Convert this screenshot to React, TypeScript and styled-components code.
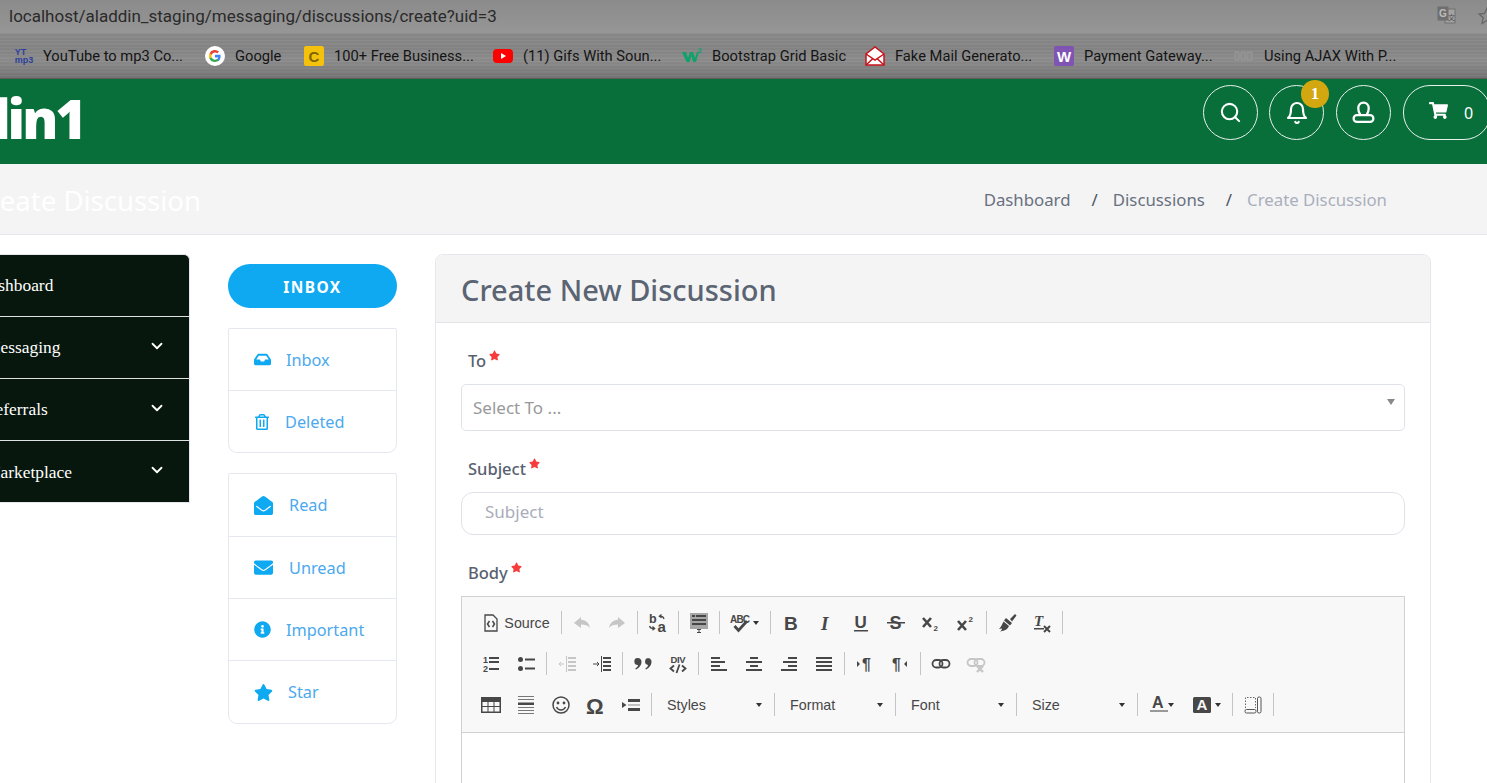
import React from "react";
import styled, { createGlobalStyle } from "styled-components";
import {
  FaShoppingCart,
  FaInbox,
  FaRegTrashAlt,
  FaEnvelopeOpen,
  FaEnvelope,
  FaInfoCircle,
  FaStar,
} from "react-icons/fa";
import { FiSearch, FiBell, FiChevronDown } from "react-icons/fi";

const UI = `"Noto Sans", "Open Sans", sans-serif`;

const Global = createGlobalStyle`
  html, body { margin: 0; padding: 0; height: 100%; overflow: hidden; background: #fff; }
  #root { height: 100%; }
  * { box-sizing: border-box; }
`;

const Page = styled.div`
  width: 1487px;
  height: 783px;
  overflow: hidden;
  display: flex;
  flex-direction: column;
  font-family: ${UI};
`;

const BrowserChrome = styled.div`
  height: 79px;
  flex: none;
  display: flex;
  flex-direction: column;
  border-bottom: 1px solid #5d5d5d;
`;

const AddressRow = styled.div`
  height: 33px;
  background: linear-gradient(#8b8b8b, #969696);
  display: flex;
  align-items: center;
  justify-content: space-between;
  padding: 0 0 2px 9px;
  color: #2a2a2a;
  font: 17px "Roboto", sans-serif;
  overflow: hidden;
`;

const AddressTools = styled.div`
  display: flex;
  align-items: center;
  gap: 21px;
  margin-right: -10px;
`;

const BookmarkRow = styled.div`
  flex: 1;
  display: flex;
  align-items: center;
  padding: 1px 0 0 15px;
  background:
    repeating-linear-gradient(180deg, rgba(255,255,255,.03) 0 1px, rgba(0,0,0,.025) 1px 3px, rgba(255,255,255,.015) 3px 5px, rgba(0,0,0,.03) 5px 7px),
    linear-gradient(#8a8a8a, #868686 35%, #8e8e8e 60%, #767676);
`;

const Bookmark = styled.div<{ $w: number }>`
  width: ${(p) => p.$w}px;
  flex: none;
  display: flex;
  align-items: center;
  gap: 10px;
  color: #141414;
  font: 14.7px "Roboto", sans-serif;
  white-space: nowrap;
`;

const Fav = styled.span<{ $bg?: string; $color?: string }>`
  width: 20px;
  height: 20px;
  flex: none;
  display: flex;
  align-items: center;
  justify-content: center;
  border-radius: 2px;
  background: ${(p) => p.$bg || "transparent"};
  color: ${(p) => p.$color || "#fff"};
  font: 700 15px "Liberation Sans", sans-serif;
`;

const YtMp3 = styled.span`
  width: 18px;
  flex: none;
  display: flex;
  flex-direction: column;
  align-items: center;
  color: #2c3f9e;
  font: 700 9px/8px "Liberation Sans", sans-serif;
`;

const Header = styled.header`
  height: 85px;
  flex: none;
  background: #086f3a;
  display: flex;
  justify-content: space-between;
  position: relative;
`;

const LogoClip = styled.div`
  width: 84px;
  height: 85px;
  overflow: hidden;
  display: flex;
  justify-content: flex-end;
  align-items: center;
`;

const Logo = styled.div`
  color: #fff;
  font: 800 54px/1 "Open Sans", sans-serif;
  letter-spacing: -3px;
  white-space: nowrap;
  margin-top: -7px;
`;

const HeaderTools = styled.div`
  display: flex;
  align-items: flex-start;
  padding-top: 6px;
  gap: 12px;
  margin-right: -4px;
`;

const RoundBtn = styled.div`
  width: 55px;
  height: 55px;
  border: 1px solid #e8f1ec;
  border-radius: 50%;
  color: #fff;
  display: flex;
  align-items: center;
  justify-content: center;
  position: relative;
  font-size: 24px;
  &:first-child { margin-right: -1px; }
`;

const Badge = styled.span`
  position: absolute;
  top: -6px;
  right: -6px;
  width: 28px;
  height: 28px;
  border-radius: 50%;
  background: #d3a70f;
  color: #fff;
  display: flex;
  align-items: center;
  justify-content: center;
  font: 700 17px "Liberation Serif", serif;
`;

const CartBtn = styled.div`
  width: 88px;
  height: 55px;
  border: 1px solid #e8f1ec;
  border-radius: 27px;
  color: #fff;
  display: flex;
  align-items: center;
  padding: 0 0 5px 25px;
  gap: 16px;
  font-size: 19px;
  span { font: 16px ${UI}; margin-top: 5px; }
`;

const SubHeader = styled.div`
  height: 71px;
  flex: none;
  background: #f4f4f4;
  border-bottom: 1px solid #e6e7ee;
  display: flex;
  align-items: center;
  justify-content: space-between;
  padding-right: 100px;
`;

const PageTitleClip = styled.div`
  width: 201px;
  overflow: hidden;
  display: flex;
  justify-content: flex-end;
`;

const PageTitle = styled.h1`
  margin: 3px 0 0;
  color: #fff;
  font: 400 27.5px ${UI};
  white-space: nowrap;
`;

const Crumbs = styled.div`
  display: flex;
  align-items: center;
  font-size: 16.8px;
  color: #68707f;
`;

const CrumbSep = styled.span`
  margin: 0 15px 0 21px;
  color: #4d5563;
`;

const CrumbCurrent = styled.span`
  color: #a9afbd;
`;

const Main = styled.main`
  flex: 1;
  display: flex;
  align-items: flex-start;
  padding-top: 19px;
  min-height: 0;
`;

const Sidebar = styled.nav`
  width: 190px;
  height: 249px;
  flex: none;
  background: #07170d;
  border-top-right-radius: 6px;
  border: 1px solid #e6e7ee;
  border-left: 0;
  overflow: hidden;
`;

const SideItem = styled.div`
  height: 62px;
  display: flex;
  align-items: center;
  justify-content: space-between;
  padding: 0 23px 0 0;
  color: #fff;
  font: 17.4px "Liberation Serif", serif;
  white-space: nowrap;
  svg { margin-bottom: 4px; }
  &:not(:last-child) { border-bottom: 1px solid #dfe3e3; }
`;

const SideLabel = styled.span<{ $offset: number }>`
  margin-left: ${(p) => p.$offset}px;
`;

const MailColumn = styled.div`
  width: 169px;
  flex: none;
  margin: 10px 38px 0 38px;
  display: flex;
  flex-direction: column;
  gap: 20px;
`;

const InboxButton = styled.button`
  height: 44px;
  border: 0;
  border-radius: 22px;
  background: #0ea9f1;
  color: #fff;
  font: 700 15.5px ${UI};
  letter-spacing: 1.4px;
  padding: 1px 0 0;
`;

const MailList = styled.div`
  border: 1px solid #e6e8f0;
  border-radius: 2px 2px 9px 9px;
`;

const MailRow = styled.div<{ $gap: number; $h?: number }>`
  height: ${(p) => p.$h || 62}px;
  display: flex;
  align-items: center;
  padding-left: 25px;
  gap: ${(p) => p.$gap}px;
  color: #4ba9ee;
  font-size: 16.3px;
  svg { color: #0ea9f1; flex: none; }
  &:not(:last-child) { border-bottom: 1px solid #e6e8f0; }
`;

const Panel = styled.section`
  width: 996px;
  flex: none;
  height: 700px;
  border: 1px solid #e6e7ee;
  border-radius: 8px 8px 0 0;
  overflow: hidden;
`;

const PanelHead = styled.div`
  height: 68px;
  background: #f4f4f4;
  border-bottom: 1px solid #e3e4e8;
  display: flex;
  align-items: center;
  padding: 2px 25px 0;
`;

const PanelTitle = styled.h2`
  margin: 0;
  color: #5a6473;
  font: 500 29px ${UI};
  white-space: nowrap;
`;

const Form = styled.div`
  padding: 25px 25px 0;
`;

const FieldLabel = styled.label`
  display: flex;
  align-items: flex-start;
  gap: 3px;
  height: 24px;
  padding-left: 7px;
  color: #586170;
  font: 500 16.5px/26px ${UI};
  margin-bottom: 12px;
  svg { color: #f63c3c; margin-top: 2px; }
`;

const SelectBox = styled.div`
  height: 47px;
  border: 1px solid #dfe2e8;
  border-radius: 5px;
  display: flex;
  align-items: center;
  justify-content: space-between;
  padding: 0 9px 0 11px;
  color: #999;
  font-size: 17px;
  margin-bottom: 25px;
  &::after {
    content: "";
    border: 4.5px solid transparent;
    border-top: 6px solid #888;
    border-bottom: 0;
    margin-top: -12px;
  }
`;

const TextInput = styled.input`
  display: block;
  width: 100%;
  height: 43px;
  border: 1px solid #dfe2e8;
  border-radius: 12px;
  padding: 0 23px 5px;
  font: 17px ${UI};
  outline: 0;
  margin-bottom: 25px;
  &::placeholder { color: #a9adba; opacity: 1; }
`;

const Editor = styled.div`
  border: 1px solid #d1d1d1;
`;

const Toolbar = styled.div`
  height: 136px;
  background: #f8f8f8;
  border-bottom: 1px solid #d1d1d1;
  padding: 5px 0 0 11px;
  display: flex;
  flex-direction: column;
`;

const ToolRow = styled.div`
  height: 41px;
  flex: none;
  display: flex;
  align-items: center;
`;

const ToolBtn = styled.span<{ $w?: number }>`
  width: ${(p) => p.$w || 35}px;
  height: 30px;
  flex: none;
  display: flex;
  align-items: center;
  justify-content: center;
  gap: 3px;
  color: #474747;
  font: 14.3px "Liberation Sans", sans-serif;
`;

const ToolSep = styled.i`
  width: 1px;
  height: 23px;
  flex: none;
  margin: 0 2px 0 3px;
  background: #c4c4c4;
`;

const Combo = styled.span<{ $w: number }>`
  width: ${(p) => p.$w}px;
  height: 30px;
  flex: none;
  display: flex;
  align-items: center;
  justify-content: space-between;
  padding: 0 9px 0 13px;
  color: #474747;
  font: 14.3px "Liberation Sans", sans-serif;
`;

const Caret = styled.b<{ $tight?: boolean }>`
  flex: none;
  margin-left: ${(p) => (p.$tight ? -4 : 0)}px;
  border: 3.5px solid transparent;
  border-top: 4px solid #333;
  border-bottom: 0;
`;

const EditArea = styled.div`
  height: 300px;
  background: #fff;
`;

const Glyph = styled.svg<{ $off?: boolean }>`
  width: 20px;
  height: 20px;
  flex: none;
  fill: #474747;
  stroke: none;
  opacity: ${(p) => (p.$off ? 0.28 : 1)};
  text { font-family: "Liberation Sans", sans-serif; }
`;

type IconProps = { off?: boolean; children: React.ReactNode };
const G = ({ off, children }: IconProps) => (
  <Glyph $off={off} viewBox="0 0 20 20">
    {children}
  </Glyph>
);

const Lines = ({ rows }: { rows: [number, number, number][] }) => (
  <>
    {rows.map(([x, y, w], i) => (
      <rect key={i} x={x} y={y} width={w} height={2} />
    ))}
  </>
);

const line = { stroke: "#474747", fill: "none" } as const;

const Icons = {
  source: (
    <G>
      <path d="M4 2h8l4 4v12H4z" {...line} strokeWidth="1.3" />
      <path d="M8.5 8 6.5 11l2 3M11.5 8l2 3-2 3" {...line} strokeWidth="1.5" />
    </G>
  ),
  undo: (
    <G off>
      <path d="M9 4 2 10l7 5v-3.4c4 0 7 .8 9 3.4-.6-4.6-4-8-9-8.3z" />
    </G>
  ),
  redo: (
    <G off>
      <path d="M11 4l7 6-7 5v-3.4c-4 0-7 .8-9 3.4.6-4.6 4-8 9-8.3z" />
    </G>
  ),
  replace: (
    <G>
      <text x="1" y="10" fontSize="12.500" fontWeight="700">b</text>
      <text x="9.500" y="19" fontSize="15" fontWeight="700">a</text>
      <path d="M16 6c-.5-2-2-3-4.500-2.800M13.500 1.500l-2.200 1.700 2.200 1.700M1.500 13c.4 1.800 2 2.800 5 2.500M4.500 13.500l2.200 2-2.200 1.800" {...line} strokeWidth="1.200" />
    </G>
  ),
  preview: (
    <G>
      <rect x="1" y="0" width="18" height="16" fill="#a6a6a6" />
      <Lines rows={[[3, 2, 3], [7, 2, 10], [3, 6, 14], [3, 10, 14]]} />
      <path d="M8 16.500h4M10 16.500v3M8 19.500h4" {...line} />
    </G>
  ),
  spell: (
    <G>
      <text x="0" y="9.500" fontSize="10" fontWeight="700" textLength="20">ABC</text>
      <path d="M4.500 13l4 4.500 8.500-9.500" {...line} strokeWidth="2.800" />
    </G>
  ),
  bold: (
    <G>
      <text x="3" y="17" fontSize="19" fontWeight="700">B</text>
    </G>
  ),
  italic: (
    <G>
      <text x="5" y="17" fontSize="19" fontWeight="700" fontStyle="italic" style={{ fontFamily: "Liberation Serif" }}>I</text>
    </G>
  ),
  underline: (
    <G>
      <text x="3.500" y="15" fontSize="17" fontWeight="700">U</text>
      <rect x="3" y="17" width="14" height="1.500" />
    </G>
  ),
  strike: (
    <G>
      <text x="3.500" y="16" fontSize="18" fontWeight="700">S</text>
      <rect x="1" y="9" width="18" height="1.500" />
    </G>
  ),
  sub: (
    <G>
      <path d="M2 5l8 9m0-9-8 9" {...line} strokeWidth="2.600" />
      <text x="12.500" y="18" fontSize="8" fontWeight="700">2</text>
    </G>
  ),
  sup: (
    <G>
      <path d="M2 8l8 9m0-9-8 9" {...line} strokeWidth="2.600" />
      <text x="12.500" y="9" fontSize="8" fontWeight="700">2</text>
    </G>
  ),
  brush: (
    <G>
      <path d="M13 6 18 1l1.500 1.500-4.500 6zM9 5l6 5-2 2.500-6-5zM6.500 8.500l5.500 4.500c-1 3-4 5-9 5.500 1.500-1 2-2 2-3l-3 .5c2-2 3-4 4.500-7.500z" />
    </G>
  ),
  clear: (
    <G>
      <text x="2" y="13" fontSize="15" fontWeight="700" fontStyle="italic" style={{ fontFamily: "Liberation Serif" }}>T</text>
      <rect x="2" y="15" width="10" height="1.500" />
      <path d="M12 13l6 6m0-6-6 6" {...line} strokeWidth="2" />
    </G>
  ),
  numbered: (
    <G>
      <text x="2" y="9" fontSize="9" fontWeight="700">1</text>
      <text x="2" y="18" fontSize="9" fontWeight="700">2</text>
      <Lines rows={[[8, 3, 10], [8, 7, 10], [8, 14, 10]]} />
    </G>
  ),
  bullets: (
    <G>
      <circle cx="4.500" cy="5.500" r="2.500" />
      <circle cx="4.500" cy="14.500" r="2.500" />
      <Lines rows={[[9, 4.500, 10], [9, 13.500, 10]]} />
    </G>
  ),
  outdent: (
    <G off>
      <Lines rows={[[11, 3, 8], [11, 7, 8], [11, 11, 8], [11, 15, 8]]} />
      <rect x="9" y="2" width="1" height="16" />
      <path d="M2 10h5M4 8l-2 2 2 2" {...line} />
    </G>
  ),
  indent: (
    <G>
      <Lines rows={[[11, 3, 8], [11, 7, 8], [11, 11, 8], [11, 15, 8]]} />
      <rect x="9" y="2" width="1" height="16" />
      <path d="M1 10h6M5 8l2 2-2 2" {...line} />
    </G>
  ),
  quote: (
    <G>
      <path d="M4.500 4a3.600 3.600 0 0 1 4 3.800c0 3.800-2.800 6.500-5.500 7.700l-.7-1.100c1.500-.9 2.600-2.200 2.800-3.500A3.300 3.300 0 0 1 4.500 4zM14.500 4a3.600 3.600 0 0 1 4 3.800c0 3.800-2.800 6.500-5.500 7.700l-.7-1.100c1.500-.9 2.600-2.200 2.800-3.500a3.300 3.300 0 0 1 .9-6.900z" />
    </G>
  ),
  div: (
    <G>
      <text x="2.500" y="9" fontSize="9.500" fontWeight="700" textLength="15">DIV</text>
      <path d="M6 11.500l-3.500 3 3.500 3M14 11.500l3.500 3-3.500 3M11.500 10.500l-3 8.500" {...line} strokeWidth="1.800" />
    </G>
  ),
  left: (
    <G>
      <Lines rows={[[2, 3, 9], [2, 7, 14], [2, 11, 9], [2, 15, 16]]} />
    </G>
  ),
  center: (
    <G>
      <Lines rows={[[6, 3, 8], [2, 7, 16], [6, 11, 8], [2, 15, 16]]} />
    </G>
  ),
  right: (
    <G>
      <Lines rows={[[9, 3, 9], [4, 7, 14], [9, 11, 9], [2, 15, 16]]} />
    </G>
  ),
  justify: (
    <G>
      <Lines rows={[[2, 3, 16], [2, 7, 16], [2, 11, 16], [2, 15, 16]]} />
    </G>
  ),
  ltr: (
    <G>
      <path d="M2 7l3 3-3 3z" />
      <text x="7" y="16" fontSize="16" fontWeight="700">¶</text>
    </G>
  ),
  rtl: (
    <G>
      <text x="2" y="16" fontSize="16" fontWeight="700">¶</text>
      <path d="M17 7l-3 3 3 3z" />
    </G>
  ),
  link: (
    <G>
      <rect x="1.500" y="6" width="10" height="7.500" rx="3.700" {...line} strokeWidth="1.800" />
      <rect x="8.500" y="6" width="10" height="7.500" rx="3.700" {...line} strokeWidth="1.800" />
    </G>
  ),
  unlink: (
    <G off>
      <rect x="1.500" y="5" width="10" height="7" rx="3.500" {...line} strokeWidth="1.800" />
      <rect x="8.500" y="5" width="10" height="7" rx="3.500" {...line} strokeWidth="1.800" />
      <path d="M11 12l6 6m0-6-6 6" {...line} strokeWidth="2.400" />
    </G>
  ),
  table: (
    <G>
      <rect x="0" y="2" width="20" height="16" />
      <path d="M1.500 7h5v4h-5zm6 0h5v4h-5zm6 0h5v4h-5zM1.500 12h5v4.500h-5zm6 0h5v4.500h-5zm6 0h5v4.500h-5z" fill="#f8f8f8" />
    </G>
  ),
  hr: (
    <G>
      <rect x="2" y="1" width="16" height="1" fill="#777" />
      <rect x="2" y="4" width="16" height="1" fill="#777" />
      <rect x="2" y="7.500" width="16" height="2.500" />
      <rect x="2" y="12" width="16" height="1" fill="#777" />
      <rect x="2" y="15" width="16" height="1" fill="#777" />
      <rect x="2" y="18" width="16" height="1" fill="#777" />
    </G>
  ),
  smile: (
    <G>
      <circle cx="10" cy="10" r="8" {...line} strokeWidth="1.500" />
      <circle cx="7" cy="8" r="1.400" />
      <circle cx="13" cy="8" r="1.400" />
      <path d="M5.500 12c1 2 2.600 3 4.500 3s3.500-1 4.500-3" {...line} strokeWidth="1.500" />
    </G>
  ),
  omega: (
    <G>
      <text x="0" y="18.500" fontSize="22" fontWeight="700">Ω</text>
    </G>
  ),
  page: (
    <G>
      <path d="M1 7l4.500 3L1 13z" />
      <rect x="7" y="4" width="12" height="3" />
      <rect x="7" y="13" width="12" height="3" />
      <rect x="7" y="9.500" width="12" height="1" fill="#888" />
    </G>
  ),
  color: (
    <G>
      <text x="3" y="13" fontSize="16" fontWeight="700">A</text>
      <rect x="1" y="15" width="18" height="2" fill="#999" />
    </G>
  ),
  bgcolor: (
    <G>
      <rect x="1" y="2" width="18" height="16" rx="1.500" />
      <text x="4.500" y="15" fontSize="15" fontWeight="700" fill="#f8f8f8">A</text>
    </G>
  ),
  blocks: (
    <G>
      <path d="M2.500 13V2.500h10V13" fill="none" stroke="#666" strokeDasharray="1.500 1.500" />
      <rect x="2" y="14.500" width="11" height="3.500" rx="1.500" fill="none" stroke="#555" />
      <rect x="14.500" y="2" width="3.500" height="16" rx="1.500" fill="none" stroke="#555" />
    </G>
  ),
};

const GoogleMark = () => (
  <svg width="20" height="20" viewBox="0 0 20 20" style={{ flex: "none" }}>
    <circle cx="10" cy="10" r="10" fill="#fff" />
    <path d="M15.600 10.200c0-.5 0-1-.1-1.400H10v2.600h3.200a2.700 2.700 0 0 1-1.200 1.800v1.500h1.900c1.100-1 1.700-2.600 1.700-4.500z" fill="#4285f4" />
    <path d="M10 16c1.600 0 3-.5 3.900-1.400L12 13.100c-.5.400-1.200.6-2 .6-1.600 0-2.900-1-3.400-2.500h-2v1.600A6 6 0 0 0 10 16z" fill="#34a853" />
    <path d="M6.600 11.200a3.600 3.600 0 0 1 0-2.400V7.200h-2a6 6 0 0 0 0 5.600z" fill="#fbbc05" />
    <path d="M10 6.400c.9 0 1.700.3 2.300.9l1.700-1.700A6 6 0 0 0 4.600 7.200l2 1.600c.5-1.400 1.800-2.400 3.400-2.400z" fill="#ea4335" />
  </svg>
);

const MailMark = () => (
  <svg width="20" height="20" viewBox="0 0 20 20" style={{ flex: "none" }}>
    <path d="M1 8 10 1l9 7v11H1z" fill="#fff" stroke="#c8131b" strokeWidth="1.500" />
    <path d="M1 8l9 6 9-6M1 19l7-6.500M19 19l-7-6.500" fill="none" stroke="#c8131b" strokeWidth="1.500" />
  </svg>
);

const PlayMark = () => (
  <svg width="20" height="20" viewBox="0 0 20 20" style={{ flex: "none" }}>
    <rect y="3" width="20" height="14" rx="4" fill="#f00" />
    <path d="M8 7l5 3-5 3z" fill="#fff" />
  </svg>
);

const W3Mark = () => (
  <svg width="20" height="20" viewBox="0 0 20 20" style={{ flex: "none" }}>
    <path d="M0 6h4l2 6 2-6h3l2 6 2-6h2l-3 10h-3L9.500 10 7.500 16h-3z" fill="#0fa36b" />
    <text x="15.500" y="7" fontSize="7" fontWeight="700" fill="#0fa36b" fontFamily="Liberation Sans">3</text>
  </svg>
);

const FaintMark = () => (
  <svg width="20" height="20" viewBox="0 0 20 20" style={{ flex: "none" }}>
    <path d="M1 6h4v8H1zm6 0h4v8H7zm6 0h5v8h-5z" fill="#8d8d8d" stroke="#989898" />
  </svg>
);

const TranslateMark = () => (
  <svg width="19" height="19" viewBox="0 0 19 19">
    <rect x="8" y="3" width="10" height="14" fill="#a3a3a3" stroke="#707070" />
    <rect x="0.500" y="0.500" width="11" height="14" fill="#6f6f6f" />
    <text x="2" y="11" fontSize="10" fontWeight="700" fill="#bdbdbd" fontFamily="Liberation Sans">G</text>
    <text x="11" y="14" fontSize="7" fill="#4f4f4f" fontFamily="Noto Sans CJK SC">文</text>
  </svg>
);

const StarMark = () => (
  <svg width="20" height="20" viewBox="0 0 20 20">
    <path d="M10 2l2.400 5.400 5.600.6-4.200 3.800 1.200 5.700-5-3-5 3 1.200-5.700L2 8l5.600-.6z" fill="none" stroke="#666" strokeWidth="1.300" />
  </svg>
);

const UserMark = () => (
  <svg width="25" height="25" viewBox="0 0 24 24" fill="none" stroke="#fff" strokeWidth="2.200" strokeLinejoin="round" strokeLinecap="round">
    <path d="M8.800 14C7.600 12.500 7 10.500 7 8c0-3.200 2-5.500 5-5.500s5 2.300 5 5.500c0 2.500-.6 4.500-1.800 6" />
    <rect x="2.500" y="14.500" width="19" height="6.500" rx="3.200" />
  </svg>
);

const Required = () => <FaStar size={11} />;

const bookmarks: { w: number; label: string; icon: React.ReactNode }[] = [
  { w: 190, label: "YouTube to mp3 Co...", icon: <YtMp3>YT<br />mp3</YtMp3> },
  { w: 99, label: "Google", icon: <GoogleMark /> },
  { w: 189, label: "100+ Free Business...", icon: <Fav $bg="#f4c20d" $color="#7d6500">C</Fav> },
  { w: 189, label: "(11) Gifs With Soun...", icon: <PlayMark /> },
  { w: 183, label: "Bootstrap Grid Basic", icon: <W3Mark /> },
  { w: 189, label: "Fake Mail Generato...", icon: <MailMark /> },
  { w: 180, label: "Payment Gateway...", icon: <Fav $bg="#7f54b3">W</Fav> },
  { w: 190, label: "Using AJAX With P...", icon: <FaintMark /> },
];

const nav = [
  { label: "Dashboard", offset: -22, more: false },
  { label: "Messaging", offset: -15, more: true },
  { label: "Referrals", offset: -16, more: true },
  { label: "Marketplace", offset: -15, more: true },
];

export default function App() {
  return (
    <Page>
      <Global />
      <BrowserChrome>
        <AddressRow>
          <span>localhost/aladdin_staging/messaging/discussions/create?uid=3</span>
          <AddressTools>
            <TranslateMark />
            <StarMark />
          </AddressTools>
        </AddressRow>
        <BookmarkRow>
          {bookmarks.map((b) => (
            <Bookmark key={b.label} $w={b.w}>
              {b.icon}
              {b.label}
            </Bookmark>
          ))}
        </BookmarkRow>
      </BrowserChrome>

      <Header>
        <LogoClip>
          <Logo>Aladdin1</Logo>
        </LogoClip>
        <HeaderTools>
          <RoundBtn>
            <FiSearch size={23} strokeWidth={2.2} />
          </RoundBtn>
          <RoundBtn>
            <FiBell strokeWidth={2.2} />
            <Badge>1</Badge>
          </RoundBtn>
          <RoundBtn>
            <UserMark />
          </RoundBtn>
          <CartBtn>
            <FaShoppingCart />
            <span>0</span>
          </CartBtn>
        </HeaderTools>
      </Header>

      <SubHeader>
        <PageTitleClip>
          <PageTitle>Create Discussion</PageTitle>
        </PageTitleClip>
        <Crumbs>
          <span>Dashboard</span>
          <CrumbSep>/</CrumbSep>
          <span>Discussions</span>
          <CrumbSep>/</CrumbSep>
          <CrumbCurrent>Create Discussion</CrumbCurrent>
        </Crumbs>
      </SubHeader>

      <Main>
        <Sidebar>
          {nav.map((n) => (
            <SideItem key={n.label}>
              <SideLabel $offset={n.offset}>{n.label}</SideLabel>
              {n.more && <FiChevronDown size={18} strokeWidth={2.4} />}
            </SideItem>
          ))}
        </Sidebar>

        <MailColumn>
          <InboxButton>INBOX</InboxButton>
          <MailList>
            <MailRow $gap={15}><FaInbox size={17} />Inbox</MailRow>
            <MailRow $gap={15} $h={61}><FaRegTrashAlt size={16} />Deleted</MailRow>
          </MailList>
          <MailList>
            <MailRow $gap={16} $h={63}><FaEnvelopeOpen size={19} />Read</MailRow>
            <MailRow $gap={16}><FaEnvelope size={19} />Unread</MailRow>
            <MailRow $gap={15}><FaInfoCircle size={17} />Important</MailRow>
            <MailRow $gap={15}><FaStar size={19} />Star</MailRow>
          </MailList>
        </MailColumn>

        <Panel>
          <PanelHead>
            <PanelTitle>Create New Discussion</PanelTitle>
          </PanelHead>
          <Form>
            <FieldLabel>To<Required /></FieldLabel>
            <SelectBox>Select To ...</SelectBox>
            <FieldLabel>Subject<Required /></FieldLabel>
            <TextInput placeholder="Subject" readOnly />
            <FieldLabel>Body<Required /></FieldLabel>
            <Editor>
              <Toolbar>
                <ToolRow>
                  <ToolBtn $w={85}>{Icons.source}Source</ToolBtn>
                  <ToolSep />
                  <ToolBtn>{Icons.undo}</ToolBtn>
                  <ToolBtn>{Icons.redo}</ToolBtn>
                  <ToolSep />
                  <ToolBtn>{Icons.replace}</ToolBtn>
                  <ToolSep />
                  <ToolBtn>{Icons.preview}</ToolBtn>
                  <ToolSep />
                  <ToolBtn $w={45}>{Icons.spell}<Caret /></ToolBtn>
                  <ToolSep />
                  <ToolBtn>{Icons.bold}</ToolBtn>
                  <ToolBtn>{Icons.italic}</ToolBtn>
                  <ToolBtn>{Icons.underline}</ToolBtn>
                  <ToolBtn>{Icons.strike}</ToolBtn>
                  <ToolBtn>{Icons.sub}</ToolBtn>
                  <ToolBtn>{Icons.sup}</ToolBtn>
                  <ToolSep />
                  <ToolBtn>{Icons.brush}</ToolBtn>
                  <ToolBtn>{Icons.clear}</ToolBtn>
                  <ToolSep />
                </ToolRow>
                <ToolRow>
                  <ToolBtn>{Icons.numbered}</ToolBtn>
                  <ToolBtn>{Icons.bullets}</ToolBtn>
                  <ToolSep />
                  <ToolBtn>{Icons.outdent}</ToolBtn>
                  <ToolBtn>{Icons.indent}</ToolBtn>
                  <ToolSep />
                  <ToolBtn>{Icons.quote}</ToolBtn>
                  <ToolBtn>{Icons.div}</ToolBtn>
                  <ToolSep />
                  <ToolBtn>{Icons.left}</ToolBtn>
                  <ToolBtn>{Icons.center}</ToolBtn>
                  <ToolBtn>{Icons.right}</ToolBtn>
                  <ToolBtn>{Icons.justify}</ToolBtn>
                  <ToolSep />
                  <ToolBtn>{Icons.ltr}</ToolBtn>
                  <ToolBtn>{Icons.rtl}</ToolBtn>
                  <ToolSep />
                  <ToolBtn>{Icons.link}</ToolBtn>
                  <ToolBtn>{Icons.unlink}</ToolBtn>
                </ToolRow>
                <ToolRow>
                  <ToolBtn>{Icons.table}</ToolBtn>
                  <ToolBtn>{Icons.hr}</ToolBtn>
                  <ToolBtn>{Icons.smile}</ToolBtn>
                  <ToolBtn>{Icons.omega}</ToolBtn>
                  <ToolBtn>{Icons.page}</ToolBtn>
                  <ToolSep />
                  <Combo $w={117}>Styles<Caret /></Combo>
                  <ToolSep />
                  <Combo $w={115}>Format<Caret /></Combo>
                  <ToolSep />
                  <Combo $w={115}>Font<Caret /></Combo>
                  <ToolSep />
                  <Combo $w={115}>Size<Caret /></Combo>
                  <ToolSep />
                  <ToolBtn $w={43}>{Icons.color}<Caret $tight /></ToolBtn>
                  <ToolBtn $w={46}>{Icons.bgcolor}<Caret /></ToolBtn>
                  <ToolSep />
                  <ToolBtn>{Icons.blocks}</ToolBtn>
                  <ToolSep />
                </ToolRow>
              </Toolbar>
              <EditArea />
            </Editor>
          </Form>
        </Panel>
      </Main>
    </Page>
  );
}
